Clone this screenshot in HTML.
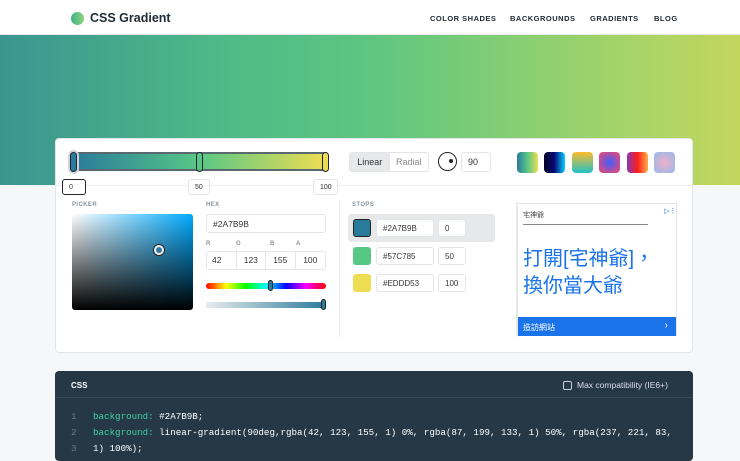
<!DOCTYPE html>
<html><head><meta charset="utf-8"><style>
*{box-sizing:border-box;margin:0;padding:0}
body{width:740px;height:453px;overflow:hidden;background:#f6f7f8;font-family:"Liberation Sans",sans-serif;position:relative;color:#223}
.a{position:absolute}
.nav{left:0;top:0;width:740px;height:35px;background:#fff;border-bottom:1px solid #e6e8ea}
.nav span{position:absolute;top:14px;font-size:7.5px;font-weight:bold;letter-spacing:.5px;color:#1e2a33}
.hero{left:0;top:35px;width:740px;height:150px;background:linear-gradient(90deg,#3a9590 0%,#50b987 30%,#5ec681 50%,#a6d468 85%,#c3d65e 100%)}
.card{left:55px;top:138px;width:638px;height:215px;background:#fff;border:1px solid #e3e5e8;border-radius:4px}
.lbl{font-size:6px;font-weight:bold;color:#8a949c;letter-spacing:.4px}
.inp{position:absolute;background:#fff;border:1px solid #e3e5e8;border-radius:3px;font-size:9px;color:#333;padding-left:6px;display:flex;align-items:center}
.knob{position:absolute;width:7px;height:20px;border:1.5px solid #223;border-radius:4px}
.sw{position:absolute;top:152px;width:21px;height:21px;border-radius:4px}
.code{left:55px;top:371px;width:638px;height:90px;background:#263845;border-radius:4px}
.ln{position:absolute;left:16px;font-family:"Liberation Mono",monospace;font-size:9.2px;color:#6b7c88}
.tx{position:absolute;left:38px;font-family:"Liberation Mono",monospace;font-size:9.2px;color:#fff;white-space:pre}
.k{color:#3fd1a8}
.x{position:absolute;left:477px;font-size:10px;color:#aab}
</style></head><body>
<div class="a nav">
<div class="a" style="left:71px;top:12px;width:13px;height:13px;border-radius:50%;background:linear-gradient(90deg,#3fb38a,#8fd27a)"></div>
<div class="a" style="left:90px;top:11px;font-size:12.5px;font-weight:bold;color:#1e2a33">CSS Gradient</div>
<span style="left:430px">COLOR SHADES</span><span style="left:510px">BACKGROUNDS</span><span style="left:590px">GRADIENTS</span><span style="left:654px">BLOG</span>
</div>
<div class="a hero"></div>
<div class="a card">
<div class="a" style="left:16px;top:13px;width:254px;height:19px;border:2px solid #5a6870;border-radius:2px;background:linear-gradient(90deg,#2a7b9b,#57c785,#eddd53)"></div>
<div class="knob" style="left:14px;top:13px;background:#2a7b9b;box-shadow:0 0 0 2px #cfd6da"></div>
<div class="knob" style="left:140px;top:13px;background:#57c785"></div>
<div class="knob" style="left:266px;top:13px;background:#eddd53"></div>
<div class="a" style="left:0;top:46px;width:638px;border-top:1px solid #eceef0"></div>
<div class="inp" style="left:6px;top:40px;width:24px;height:16px;border:1.5px solid #223;font-size:7px">0</div>
<div class="inp" style="left:132px;top:40px;width:22px;height:16px;font-size:7px">50</div>
<div class="inp" style="left:257px;top:40px;width:25px;height:16px;font-size:7px">100</div>
<div class="a" style="left:293px;top:13px;width:80px;height:20px;border:1px solid #e3e5e8;border-radius:3px;font-size:9px;display:flex"><div style="width:40px;background:#e6e8ea;text-align:center;line-height:18px;color:#333">Linear</div><div style="width:39px;text-align:center;line-height:18px;color:#888">Radial</div></div>
<div class="a" style="left:382px;top:13px;width:19px;height:19px;border:1.5px solid #222;border-radius:50%"><div class="a" style="left:10px;top:6px;width:4px;height:4px;border-radius:50%;background:#222"></div></div>
<div class="inp" style="left:405px;top:13px;width:30px;height:20px">90</div>
<div class="sw" style="left:461px;top:13px;background:linear-gradient(90deg,#2a7b9b,#57c785,#eddd53)"></div>
<div class="sw" style="left:488px;top:13px;background:linear-gradient(90deg,#020024,#090979,#00d4ff)"></div>
<div class="sw" style="left:516px;top:13px;background:linear-gradient(0deg,#22c1c3,#fdbb2d)"></div>
<div class="sw" style="left:543px;top:13px;background:radial-gradient(#3f5efb,#fc466b)"></div>
<div class="sw" style="left:571px;top:13px;background:linear-gradient(90deg,#833ab4,#fd1d1d,#fcb045)"></div>
<div class="sw" style="left:598px;top:13px;background:radial-gradient(#eeaeca,#94bbe9)"></div>
<div class="a lbl" style="left:16px;top:63px">PICKER</div>
<div class="a lbl" style="left:150px;top:63px">HEX</div>
<div class="a lbl" style="left:296px;top:63px">STOPS</div>
<div class="a" style="left:16px;top:75px;width:121px;height:96px;border-radius:3px;background:linear-gradient(0deg,#000,rgba(0,0,0,0)),linear-gradient(90deg,#fff,#00aaff)"></div>
<div class="a" style="left:98px;top:106px;width:10px;height:10px;border:2px solid #eee;border-radius:50%;box-shadow:0 0 0 1px #222"></div>
<div class="inp" style="left:150px;top:75px;width:120px;height:19px;font-size:8.5px">#2A7B9B</div>
<div class="a lbl" style="left:150px;top:102px">R</div><div class="a lbl" style="left:180px;top:102px">G</div><div class="a lbl" style="left:214px;top:102px">B</div><div class="a lbl" style="left:240px;top:102px">A</div>
<div class="a" style="left:150px;top:112px;width:120px;height:19px;border:1px solid #e3e5e8;border-radius:3px;display:flex;font-size:8.5px;color:#333"><div style="width:30px;line-height:17px;padding-left:5px;border-right:1px solid #e3e5e8">42</div><div style="width:30px;line-height:17px;text-align:center;border-right:1px solid #e3e5e8">123</div><div style="width:30px;line-height:17px;text-align:center;border-right:1px solid #e3e5e8">155</div><div style="width:30px;line-height:17px;text-align:center">100</div></div>
<div class="a" style="left:150px;top:144px;width:120px;height:6px;border-radius:3px;background:linear-gradient(90deg,red,#ff0,#0f0,#0ff,#00f,#f0f,red)"></div>
<div class="a" style="left:212px;top:141px;width:5px;height:11px;border:1px solid #222;border-radius:3px;background:#2a7b9b"></div>
<div class="a" style="left:150px;top:163px;width:120px;height:6px;background:linear-gradient(90deg,#e8eced,#2a7b9b)"></div>
<div class="a" style="left:265px;top:160px;width:5px;height:11px;border:1px solid #222;border-radius:3px;background:#2a7b9b"></div>
<div class="a" style="left:283px;top:62px;height:136px;border-left:1px solid #e8eaec"></div>
<div class="a" style="left:460px;top:62px;height:136px;border-left:1px solid #e8eaec"></div>
<div class="a" style="left:292px;top:75px;width:147px;height:28px;background:#e6e8ea;border-radius:3px"></div>
<div class="a" style="left:297px;top:80px;width:18px;height:18px;background:#2a7b9b;border:1.5px solid #222;border-radius:3px"></div>
<div class="inp" style="left:320px;top:80px;width:58px;height:18px;font-size:8px">#2A7B9B</div>
<div class="inp" style="left:382px;top:80px;width:28px;height:18px;font-size:8px">0</div><div class="x" style="top:83px">×</div>
<div class="a" style="left:297px;top:108px;width:18px;height:18px;background:#57c785;border-radius:3px"></div>
<div class="inp" style="left:320px;top:108px;width:58px;height:18px;font-size:8px">#57C785</div>
<div class="inp" style="left:382px;top:108px;width:28px;height:18px;font-size:8px">50</div><div class="x" style="top:110px">×</div>
<div class="a" style="left:297px;top:135px;width:18px;height:18px;background:#eddd53;border-radius:3px"></div>
<div class="inp" style="left:320px;top:135px;width:58px;height:18px;font-size:8px">#EDDD53</div>
<div class="inp" style="left:382px;top:135px;width:28px;height:18px;font-size:8px">100</div><div class="x" style="top:138px">×</div>
<div class="a" style="left:461px;top:64px;width:160px;height:133px;border:1px solid #e3e5e8;background:#fff">
<div class="a" style="left:5px;top:6px;font-size:7px;color:#444;font-family:'Liberation Sans','Noto Sans CJK TC',sans-serif">宅神爺</div>
<div class="a" style="left:146px;top:3px;font-size:7px;color:#1a73e8">▷⋮</div>
<div class="a" style="left:5px;top:20px;width:125px;border-top:1px solid #888"></div>
<div class="a" style="left:5px;top:42px;font-size:20px;line-height:27px;color:#1a73e8;font-family:'Liberation Sans','Noto Sans CJK TC',sans-serif">打開[宅神爺]，<br>換你當大爺</div>
<div class="a" style="left:0;top:113px;width:158px;height:19px;background:#1a73e8;color:#fff;font-size:8px;padding:5px 0 0 5px;font-family:'Liberation Sans','Noto Sans CJK TC',sans-serif">造訪網站<span style="position:absolute;right:8px;top:3px;font-size:10px">›</span></div>
</div>
</div>
<div class="a code">
<div class="a" style="left:16px;top:10px;font-size:8px;font-weight:bold;color:#fff">CSS</div>
<div class="a" style="left:508px;top:10px;width:9px;height:9px;border:1px solid #ccd;border-radius:2px"></div>
<div class="a" style="left:522px;top:9px;font-size:8.5px;color:#dde">Max compatibility (IE6+)</div>
<div class="a" style="left:0;top:26px;width:638px;border-top:1px solid #33495a"></div>
<div class="ln" style="top:40px">1</div><div class="tx" style="top:40px"><span class="k">background:</span> #2A7B9B;</div>
<div class="ln" style="top:56px">2</div><div class="tx" style="top:56px"><span class="k">background:</span> linear-gradient(90deg,rgba(42, 123, 155, 1) 0%, rgba(87, 199, 133, 1) 50%, rgba(237, 221, 83,</div>
<div class="ln" style="top:72px">3</div><div class="tx" style="top:72px">1) 100%);</div>
</div>
</body></html>
